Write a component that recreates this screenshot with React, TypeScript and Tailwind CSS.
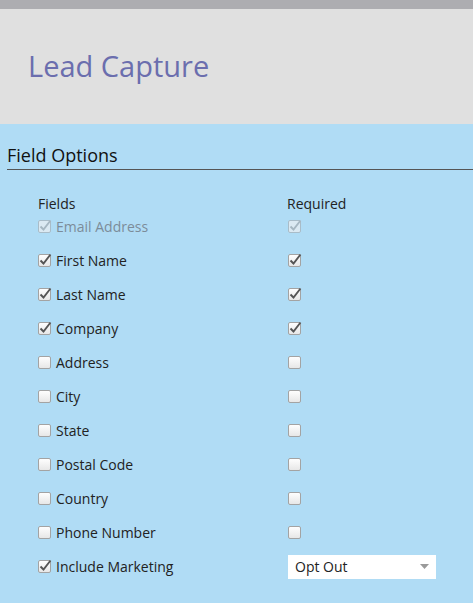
import React from 'react'

const font = { fontFamily: '"Open Sans", "Noto Sans", sans-serif' }

function Check({ checked, disabled }: { checked?: boolean; disabled?: boolean }) {
  return (
    <svg width="15" height="16" viewBox="0 0 15 16" className="shrink-0">
      <defs>
        <linearGradient id="cbg" x1="0" y1="0" x2="0" y2="1">
          <stop offset="0" stopColor="#ffffff" />
          <stop offset="1" stopColor="#e6e6e6" />
        </linearGradient>
      </defs>
      <rect
        x="0.5"
        y="2.5"
        width="12"
        height="12"
        rx="1.5"
        fill={disabled ? '#dbe9f2' : 'url(#cbg)'}
        stroke={disabled ? '#a9bcc8' : '#a3a3a3'}
      />
      {checked && (
        <path
          d="M2.5 8.5 L5.5 11.5 L12.5 2.5"
          fill="none"
          stroke={disabled ? '#a6b7c2' : '#555555'}
          strokeWidth="1.9"
        />
      )}
    </svg>
  )
}

const rows = [
  { name: 'First Name', on: true, req: true },
  { name: 'Last Name', on: true, req: true },
  { name: 'Company', on: true, req: true },
  { name: 'Address' },
  { name: 'City' },
  { name: 'State' },
  { name: 'Postal Code' },
  { name: 'Country' },
  { name: 'Phone Number' },
]

export default function App() {
  return (
    <div className="w-[473px] h-[603px] overflow-hidden bg-[#b0dcf5]" style={font}>
      {/* top strip */}
      <div className="h-[9px] bg-[#adadb1]" />

      {/* header */}
      <div className="h-[115px] bg-[#e0e0e0] pl-[28px] pt-[37px]">
        <h1 className="text-[29px] leading-[40px] text-[#6b6eae]">Lead Capture</h1>
      </div>

      {/* field options */}
      <div className="pl-[7px] pt-[19px]">
        <h2 className="text-[18px] leading-[25px] text-[#111]">Field Options</h2>
        <div className="mt-[1px] h-px bg-[#555]" />
      </div>

      <div className="pl-[38px] pt-[23px] text-[14px] text-[#222]">
        <div className="flex h-[20px] items-center">
          <div className="w-[249px]">Fields</div>
          <div>Required</div>
        </div>

        <div className="flex h-[26px] items-center">
          <div className="flex w-[250px] items-center gap-[3px] text-[#7c8c99]">
            <Check checked disabled />
            <span>Email Address</span>
          </div>
          <Check checked disabled />
        </div>

        {rows.map((r) => (
          <div key={r.name} className="mt-[8px] flex h-[26px] items-center">
            <div className="flex w-[250px] items-center gap-[3px]">
              <Check checked={r.on} />
              <span>{r.name}</span>
            </div>
            <Check checked={r.req} />
          </div>
        ))}

        <div className="mt-[8px] flex h-[26px] items-center">
          <div className="flex w-[250px] items-center gap-[3px]">
            <Check checked />
            <span>Include Marketing</span>
          </div>
          <div className="mt-[1px] flex h-[24px] w-[148px] items-center justify-between bg-white pl-[7px] pr-[7px]">
            <span>Opt Out</span>
            <svg width="9" height="5" viewBox="0 0 9 5">
              <path d="M0 0 H9 L4.5 5 Z" fill="#9a9a9a" />
            </svg>
          </div>
        </div>
      </div>
    </div>
  )
}
